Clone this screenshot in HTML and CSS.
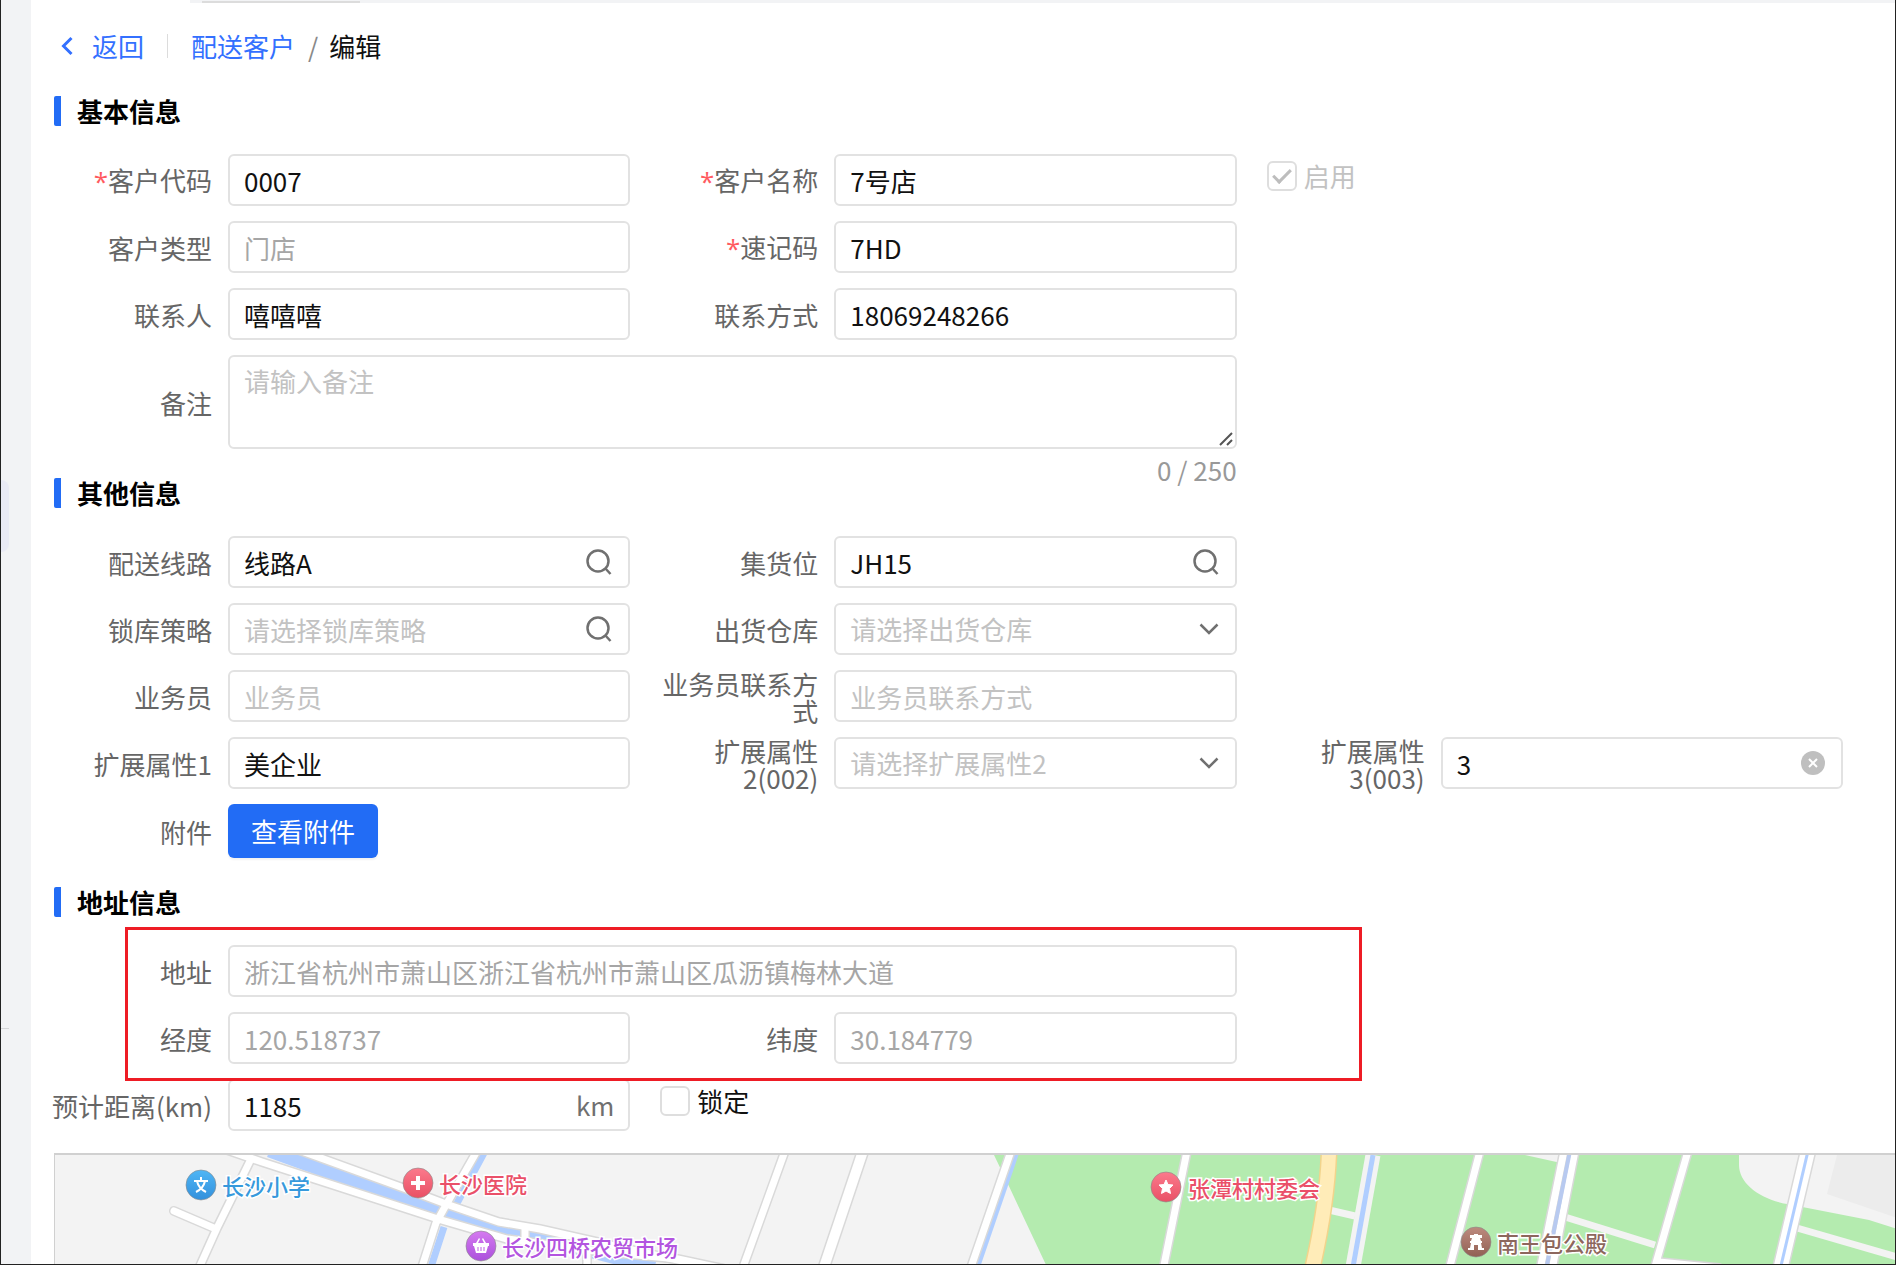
FILE: index.html
```html
<!DOCTYPE html>
<html lang="zh-CN">
<head>
    <meta charset="UTF-8">
    <meta name="viewport" content="width=device-width, initial-scale=1.0">
    <title>配送客户 - 编辑</title>
    <link rel="stylesheet" href="styles.css">
</head>
<body>

<aside class="sidebar">
    <div class="sidebar-handle"></div>
    <div class="sidebar-line"></div>
</aside>

<main class="main">
    <div class="tabs-edge"><span class="tab-active"></span></div>

    <nav class="breadcrumb">
        <a href="#" class="back">
            <svg class="back-icon" viewBox="0 0 12 20"><path d="M10.500 2L2.500 10l8 8" /></svg>
            返回
        </a>
        <span class="divider"></span>
        <a href="#">配送客户</a>
        <span class="slash">/</span>
        <span class="current">编辑</span>
    </nav>

    <form id="form">
        <h2 class="section-title">基本信息</h2>
        <div class="form-grid">
            <div class="field">
                <label for="code"><i class="required">*</i>客户代码</label>
                <input type="text" id="code" value="0007">
            </div>
            <div class="field">
                <label for="name"><i class="required">*</i>客户名称</label>
                <input type="text" id="name" value="7号店">
            </div>
            <label class="check disabled"><input type="checkbox" checked disabled>启用</label>

            <div class="field">
                <label for="type">客户类型</label>
                <input type="text" id="type" value="门店" disabled>
            </div>
            <div class="field">
                <label for="short"><i class="required">*</i>速记码</label>
                <input type="text" id="short" value="7HD">
            </div>

            <div class="field first">
                <label for="contact">联系人</label>
                <input type="text" id="contact" value="嘻嘻嘻">
            </div>
            <div class="field">
                <label for="phone">联系方式</label>
                <input type="text" id="phone" value="18069248266">
            </div>

            <div class="field first wide">
                <label for="remark">备注</label>
                <div class="control">
                    <textarea id="remark" placeholder="请输入备注" maxlength="250"></textarea>
                    <svg class="resizer" viewBox="0 0 14 14"><path d="M1 13L13 1M8 13l5-5" /></svg>
                </div>
                <div class="counter">0 / 250</div>
            </div>
        </div>

        <h2 class="section-title">其他信息</h2>
        <div class="form-grid">
            <div class="field">
                <label for="route">配送线路</label>
                <div class="control">
                    <input type="text" id="route" value="线路A">
                    <svg class="icon search" viewBox="0 0 26 26"><circle cx="12" cy="12" r="10.500" /><path d="M19 19l5.500 6" /></svg>
                </div>
            </div>
            <div class="field">
                <label for="location">集货位</label>
                <div class="control">
                    <input type="text" id="location" value="JH15">
                    <svg class="icon search" viewBox="0 0 26 26"><circle cx="12" cy="12" r="10.500" /><path d="M19 19l5.500 6" /></svg>
                </div>
            </div>

            <div class="field first">
                <label for="lock">锁库策略</label>
                <div class="control">
                    <input type="text" id="lock" placeholder="请选择锁库策略">
                    <svg class="icon search" viewBox="0 0 26 26"><circle cx="12" cy="12" r="10.500" /><path d="M19 19l5.500 6" /></svg>
                </div>
            </div>
            <div class="field">
                <label for="warehouse">出货仓库</label>
                <div class="control">
                    <select id="warehouse">
                        <option value="">请选择出货仓库</option>
                    </select>
                    <svg class="icon arrow" viewBox="0 0 20 12"><path d="M1.500 1.500L10 10l8.500-8.500" /></svg>
                </div>
            </div>

            <div class="field first">
                <label for="sales">业务员</label>
                <input type="text" id="sales" placeholder="业务员">
            </div>
            <div class="field">
                <label for="salesPhone">业务员联系方式</label>
                <input type="text" id="salesPhone" placeholder="业务员联系方式">
            </div>

            <div class="field first">
                <label for="ext1">扩展属性1</label>
                <input type="text" id="ext1" value="美企业">
            </div>
            <div class="field">
                <label for="ext2">扩展属性<br>2(002)</label>
                <div class="control">
                    <select id="ext2">
                        <option value="">请选择扩展属性2</option>
                    </select>
                    <svg class="icon arrow" viewBox="0 0 20 12"><path d="M1.500 1.500L10 10l8.500-8.500" /></svg>
                </div>
            </div>
            <div class="field">
                <label for="ext3">扩展属性<br>3(003)</label>
                <div class="control">
                    <input type="text" id="ext3" value="3">
                    <button type="button" class="icon clear" aria-label="清除">
                        <svg viewBox="0 0 24 24"><circle cx="12" cy="12" r="12" /><path d="M8 8l8 8M16 8l-8 8" /></svg>
                    </button>
                </div>
            </div>

            <div class="field">
                <label for="attachment">附件</label>
                <button type="button" id="attachment" class="btn">查看附件</button>
            </div>
        </div>

        <h2 class="section-title">地址信息</h2>
        <div class="form-grid marked">
            <div class="field wide">
                <label for="address">地址</label>
                <input type="text" id="address" value="浙江省杭州市萧山区浙江省杭州市萧山区瓜沥镇梅林大道" disabled>
            </div>
            <div class="field first">
                <label for="lng">经度</label>
                <input type="text" id="lng" value="120.518737" disabled>
            </div>
            <div class="field">
                <label for="lat">纬度</label>
                <input type="text" id="lat" value="30.184779" disabled>
            </div>
        </div>
        <div class="form-grid distance-row">
            <div class="field">
                <label for="distance">预计距离(km)</label>
                <div class="control">
                    <input type="text" id="distance" value="1185">
                    <span class="unit">km</span>
                </div>
            </div>
            <label class="check"><input type="checkbox">锁定</label>
        </div>
    </form>

    <div class="map">
        <svg viewBox="0 0 1840 110" preserveAspectRatio="xMinYMin slice">
            <defs>
                <linearGradient id="blue" x2="0" y2="1"><stop stop-color="#4fb6f5" /><stop offset="1" stop-color="#3390dc" /></linearGradient>
                <linearGradient id="red" x2="0" y2="1"><stop stop-color="#fb7a8c" /><stop offset="1" stop-color="#e95065" /></linearGradient>
                <linearGradient id="purple" x2="0" y2="1"><stop stop-color="#d57af0" /><stop offset="1" stop-color="#ab50dc" /></linearGradient>
                <linearGradient id="brown" x2="0" y2="1"><stop stop-color="#bd8b7e" /><stop offset="1" stop-color="#916054" /></linearGradient>
            </defs>

            <!-- land -->
            <path fill="#b4ebaf" d="M939 0L952 27L992 112H1842V0z" />
            <path fill="#f3f3f3" d="M1684 0v10c0 18 20 34 48 39l82 16 28 9V0zM1470 0h36v8z" />
            <path fill="#ececec" d="M1782 0l-10 39 70 24V0z" />
            <g fill="none" stroke="#f3f3f3" stroke-width="7">
                <path d="M1274 55l26 6M1510 62l90 28M1742 73l100 29" />
                <path stroke-width="15" d="M1318 0l-20 112" />
            </g>

            <!-- water -->
            <g fill="none" stroke="#b0ceff">
                <path stroke-width="17" d="M215-6L366 49 411 64 468 78 538 95 600 111" />
                <path stroke-width="7" d="M429-2L401 50M389 72L376 112" />
                <path stroke-width="5" d="M1318 0l-20 112" />
                <path stroke-width="6" d="M961-2L922 112" />
            </g>

            <!-- roads: grey edge first, white on top -->
            <g fill="none" stroke="#d9d9d9" stroke-width="10" stroke-linecap="round">
                <path d="M172-5L207 7 383 64 452 84 540 96 623 104 670 114" />
                <path d="M230-10L354 35 391 49 444 67 485 74 538 86 586 97 650 111" />
                <path d="M196 4L162 73 144 113M119 56L161 74" />
                <path d="M422-4L391 50 381 68 366 115M470 74v14M532 86v26" />
                <path d="M730-4L687 115M956-4L915 115M1132-4L1108 115" />
                <path d="M1425-4L1394 115M1509-4L1485 115M1520-4L1497 115M1633-4L1599 115M1604 107l60 6" />
                <path stroke-width="13" d="M808-4L768 115" />
                <path stroke-width="17" d="M1753-4L1725 115" />
            </g>
            <g fill="none" stroke="#fff" stroke-width="7" stroke-linecap="round">
                <path d="M172-5L207 7 383 64 452 84 540 96 623 104 670 114" />
                <path d="M230-10L354 35 391 49 444 67 485 74 538 86 586 97 650 111" />
                <path d="M196 4L162 73 144 113M119 56L161 74" />
                <path d="M422-4L391 50 381 68 366 115M470 74v14M532 86v26" />
                <path d="M730-4L687 115M956-4L915 115M1132-4L1108 115" />
                <path d="M1425-4L1394 115M1509-4L1485 115M1520-4L1497 115M1633-4L1599 115M1604 107l60 6" />
                <path stroke-width="10" d="M808-4L768 115" />
                <path stroke-width="14" d="M1753-4L1725 115" />
            </g>
            <path fill="none" stroke="#b8caf0" stroke-width="4" d="M1515-4L1491 115" />
            <path fill="none" stroke="#b0ceff" stroke-width="3" d="M1753-4L1725 115" />
            <path fill="none" stroke="#f2d48c" stroke-width="17" d="M1274-2Q1272 50 1257 115" />
            <path fill="none" stroke="#ffecb8" stroke-width="14" d="M1274-2Q1272 50 1257 115" />

            <!-- places -->
            <g class="pin">
                <circle cx="146" cy="30" r="15" fill="url(#blue)" />
                <path class="line" d="M146 22v3M139 26h14M141 37c6-3 8-6 9-11M151 37c-6-3-8-6-9-11" />
                <text x="167" y="40" fill="#3799dc">长沙小学</text>
            </g>
            <g class="pin">
                <circle cx="363" cy="28" r="15" fill="url(#red)" />
                <path class="line bold" d="M363 21v14M356 28h14" />
                <text x="384" y="38" fill="#ea5069">长沙医院</text>
            </g>
            <g class="pin">
                <circle cx="426" cy="91" r="15" fill="url(#purple)" />
                <path fill="#fff" d="M418 88h3l3-5 1 1-2 4h6l-2-4 1-1 3 5h3v3h-1l-2 7h-10l-2-7h-1z" />
                <path stroke="#bd5fe4" d="M423 92v4M426 92v4M429 92v4" />
                <text x="447" y="101" fill="#b355e0">长沙四桥农贸市场</text>
            </g>
            <g class="pin">
                <circle cx="1111" cy="32" r="15" fill="url(#red)" />
                <path fill="#fff" stroke="#fff" stroke-linejoin="round" d="M1111 25l2 4.500 5 .5-3.500 3.500 1 5-4.500-2.500-4.500 2.500 1-5-3.500-3.500 5-.5z" />
                <text x="1133" y="42" fill="#ea5069">张潭村村委会</text>
            </g>
            <g class="pin">
                <circle cx="1421" cy="87" r="15" fill="url(#brown)" />
                <path fill="#fff" d="M1415 80h4v-1h4v1h4v3h-2l1 3h1v2h-1l1 5h2v2h-6v-5h-4v5h-6v-2h2l1-5h-1v-2h1l1-3h-2z" />
                <text x="1442" y="97" fill="#8d675d">南王包公殿</text>
            </g>
        </svg>
    </div>
</main>

</body>
</html>
```

FILE: styles.css
```css
*,
*::after {
    box-sizing: border-box;
}

body {
    display: flex;
    height: 100vh;
    margin: 0;
    overflow: hidden;
    border: 1px solid #222;
    border-top: none;
    background-color: white;
    color: #111;
    font-family: "Noto Sans CJK SC", sans-serif;
    font-size: 26px;
    line-height: 30px;
}

a {
    color: #3370ff;
    text-decoration: none;
}

/* Collapsed side menu */
.sidebar {
    flex: none;
    width: 30px;
    background-color: #f2f3f5;
}

.sidebar-handle {
    width: 8px;
    height: 72px;
    margin-top: 480px;
    border-radius: 0 8px 8px 0;
    background-color: #e9eaf5;
}

.sidebar-line {
    width: 8px;
    height: 1px;
    margin-top: 476px;
    background-color: #d5d6d8;
}

.main {
    flex: 1;
    min-width: 0;
    display: flex;
    flex-direction: column;
    padding-left: 23px;
}

/* Bottom edge of the tab bar */
.tabs-edge {
    flex: none;
    height: 3px;
    margin-left: 136px;
    padding: 1px 0 0 12px;
    background-color: #f2f3f5;
}

.tab-active {
    display: block;
    width: 158px;
    height: 2px;
    background-color: #dcdcdc;
}

.breadcrumb {
    display: flex;
    align-items: center;
    height: 30px;
    margin: 28px 0 35px 7px;
}

.back {
    display: flex;
    align-items: center;
    gap: 19px;
}

.back-icon {
    width: 12px;
    height: 20px;
    fill: none;
    stroke: #3370ff;
    stroke-width: 3;
}

.divider {
    width: 1px;
    height: 24px;
    margin: 0 23px;
    background-color: #dcdcdc;
}

.slash {
    margin: 0 11px 0 13px;
    color: #888;
}

.current {
    color: #111;
}

#form {
    padding-right: 52px;
}

.section-title {
    margin: 0 0 28px;
    padding-left: 16px;
    border-left: 7px solid #226cf5;
    border-radius: 2px;
    color: #000;
    font-size: 26px;
    font-weight: bold;
    line-height: 30px;
}

.form-grid + .section-title {
    margin-top: 29px;
}

/* Three fields on a line */
.form-grid {
    display: grid;
    grid-template-columns: repeat(3, minmax(0, 1fr));
    align-items: start;
    gap: 15px 30px;
}

/* Label on the left, control on the right */
.field {
    display: grid;
    grid-template-columns: 158px minmax(0, 1fr);
    align-items: center;
    column-gap: 16px;
}

.field.first {
    grid-column-start: 1;
}

.field.wide {
    grid-column: 1 / span 2;
}

.field > label {
    max-height: 52px;
    color: #666;
    line-height: 27px;
    text-align: right;
}

.distance-row .field > label {
    display: flex;
    justify-content: flex-end;
    white-space: nowrap;
}

.required {
    color: #ff5a5f;
    font-family: "Open Sans", sans-serif;
    font-style: normal;
    line-height: 1;
}

input[type="text"],
select,
textarea {
    display: block;
    width: 100%;
    height: 52px;
    margin: 0;
    padding: 0 14px;
    border: 2px solid #e2e2e2;
    border-radius: 6px;
    outline: 0;
    background-color: white;
    color: #111;
    font: inherit;
}

input[type="text"]:disabled {
    color: #a6a6a6;
}

textarea {
    height: 94px;
    padding: 9px 14px;
    resize: none;
}

select {
    appearance: none;
    color: #c2c2c2;
}

::placeholder {
    color: #c2c2c2;
}

/* Sits partly beside the next title */
.counter {
    grid-column: 2;
    height: 0;
    color: #999;
    line-height: 42px;
    text-align: right;
}

/* Icons and units inside a text box */
.control {
    position: relative;
}

.resizer {
    position: absolute;
    right: 4px;
    bottom: 3px;
    width: 14px;
    height: 14px;
    fill: none;
    stroke: #555;
    stroke-width: 2;
}

.icon {
    position: absolute;
    top: 0;
    bottom: 0;
    right: 18px;
    margin: auto 0;
    fill: none;
    stroke: #707070;
    stroke-width: 2.500;
    pointer-events: none;
}

.search {
    width: 26px;
    height: 26px;
}

.arrow {
    width: 20px;
    height: 12px;
}

.clear {
    width: 24px;
    height: 24px;
    padding: 0;
    border: none;
    background: none;
    pointer-events: auto;
}

.clear svg {
    display: block;
    fill: #bfbfbf;
    stroke: white;
    stroke-width: 2;
}

.clear circle {
    stroke: none;
}

.unit {
    position: absolute;
    top: 11px;
    right: 16px;
    color: #707070;
}

.check {
    display: flex;
    align-items: center;
    gap: 7px;
    height: 44px;
}

.check input {
    appearance: none;
    display: grid;
    place-items: center;
    width: 30px;
    height: 30px;
    margin: 0;
    border: 2px solid #dedede;
    border-radius: 6px;
}

.check input:checked::after {
    content: "";
    width: 18px;
    height: 10px;
    margin-top: -5px;
    border: solid #bdbdbd;
    border-width: 0 0 3px 3px;
    transform: rotate(-45deg);
}

.check.disabled {
    color: #c2c2c2;
}

.btn {
    justify-self: start;
    height: 54px;
    padding: 0 23px;
    border: none;
    border-radius: 6px;
    background-color: #226cf5;
    box-shadow: 0 2px 2px rgba(0, 0, 0, 0.05);
    color: white;
    font: inherit;
}

/* Red frame round the address fields */
.marked {
    position: relative;
}

.marked::after {
    content: "";
    position: absolute;
    z-index: 1;
    top: -18px;
    bottom: -17px;
    left: 71px;
    width: 1237px;
    max-width: 100%;
    border: 3px solid #ee1c25;
    pointer-events: none;
}

.distance-row {
    margin-top: 15px;
}

.map {
    flex: 1;
    min-height: 0;
    margin-top: 22px;
    border: 1px solid #d0d0d0;
    border-width: 2px 0 0 1px;
    background-color: #f3f3f3;
    overflow: hidden;
}

.map svg {
    display: block;
    width: 100%;
    height: 100%;
}

.pin circle {
    stroke: #8a8a8a;
    stroke-opacity: 0.6;
}

.pin text {
    font-size: 22px;
    font-weight: 500;
    stroke: white;
    stroke-width: 3px;
    paint-order: stroke;
}

.pin .line {
    fill: none;
    stroke: white;
    stroke-width: 2;
}

.pin .bold {
    stroke-width: 4;
}
```
